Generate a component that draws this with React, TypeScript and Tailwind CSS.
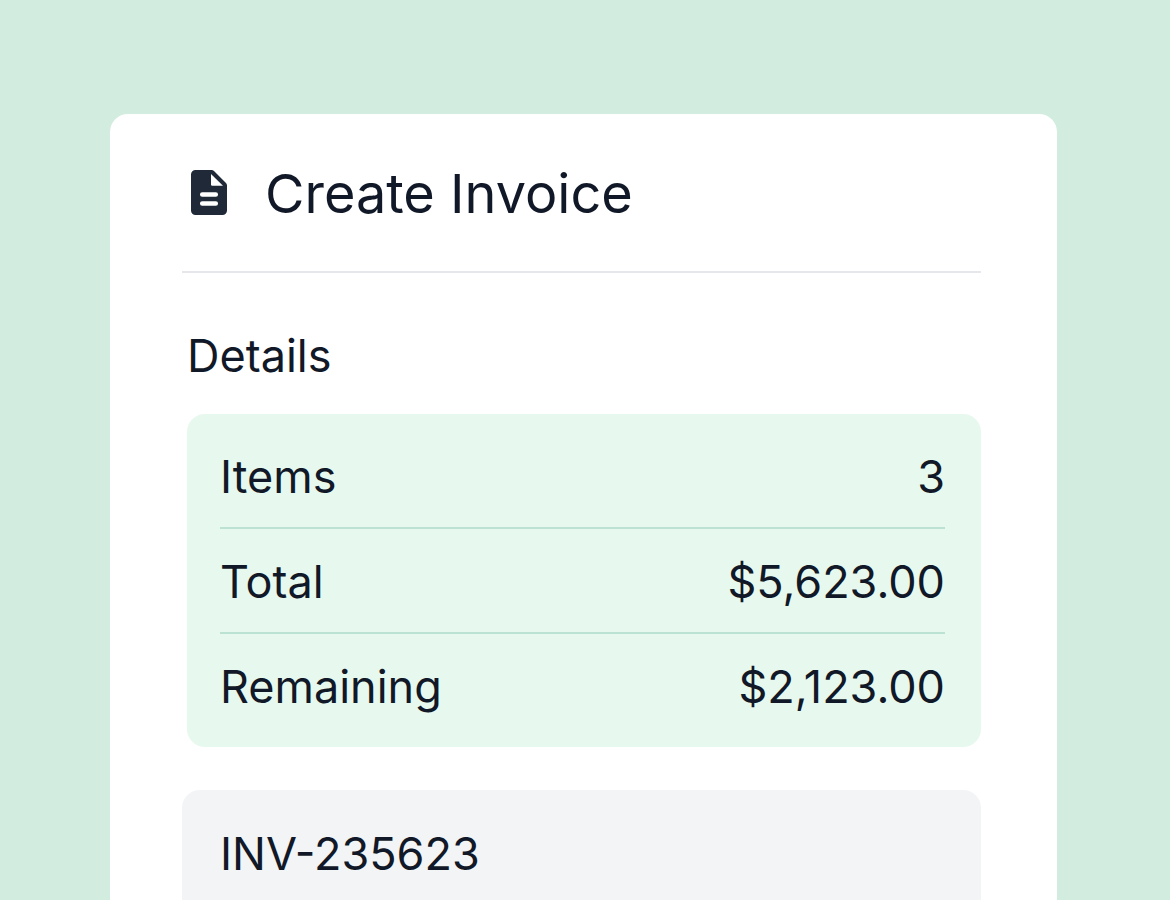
const summary = [
  { label: "Items", value: "3" },
  { label: "Total", value: "$5,623.00" },
  { label: "Remaining", value: "$2,123.00" },
];

function InvoiceIcon() {
  return (
    <svg viewBox="0 0 36 45" className="mt-4 h-[45px] w-9 shrink-0" aria-hidden="true">
      <path
        d="M4.5 0H20.5Q22 0 23 1L35 13Q36 14 36 15.5V40.5a4.5 4.5 0 0 1-4.5 4.5H4.5A4.5 4.5 0 0 1 0 40.5V4.5A4.5 4.5 0 0 1 4.5 0Z"
        fill="#1f2937"
      />
      <path d="M20 4V14.5Q20 15.7 21.2 15.7H32Z" fill="#fff" />
      <path d="M11.2 24.6H24.8M11.2 33.4H24.8" stroke="#fff" strokeWidth="4.5" strokeLinecap="round" />
    </svg>
  );
}

export default function App() {
  return (
    <div className="h-screen overflow-hidden bg-[#d2ecdf] pt-[114px] pr-[113px] pl-[110px] font-['Inter',sans-serif] text-[#111827]">
      <main className="min-h-full rounded-t-[18px] bg-white pr-[76px] pl-[72px]">
        {/* Header */}
        <header className="flex items-start gap-[38px] border-b-2 border-gray-200 pt-10 pb-[37px] pl-[9px]">
          <InvoiceIcon />
          <h1 className="text-[54px] leading-[80px]">Create Invoice</h1>
        </header>

        {/* Details */}
        <section className="pt-[55px] pl-[5px]">
          <h2 className="text-[45px] leading-[55px]">Details</h2>
          <dl className="mt-[31px] divide-y-2 divide-[#bbe2d3] rounded-[18px] bg-[#e7f8ef] py-2.5 pr-9 pl-[33px] text-[45px] leading-[55px]">
            {summary.map((row) => (
              <div key={row.label} className="flex items-center justify-between pt-[25px] pb-[23px]">
                <dt>{row.label}</dt>
                <dd>{row.value}</dd>
              </div>
            ))}
          </dl>
        </section>

        {/* Invoice number */}
        <div className="mt-[43px] rounded-[18px] bg-gray-100 px-[38px] py-9 text-[45px] leading-[55px]">
          INV-235623
        </div>
      </main>
    </div>
  );
}
